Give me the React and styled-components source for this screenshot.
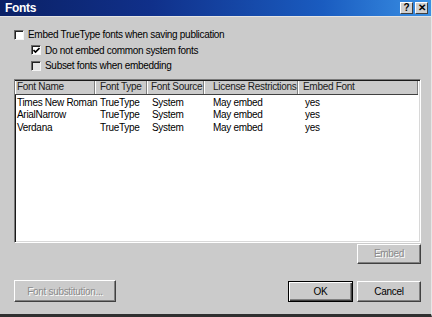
import React from 'react';
import styled, { createGlobalStyle } from 'styled-components';

const GlobalStyle = createGlobalStyle`
  html, body {
    margin: 0;
    padding: 0;
    background: #cbcbcb;
  }
  body {
    font-family: "Liberation Sans", Arial, sans-serif;
    font-size: 10px;
    color: #000;
  }
`;

const Window = styled.div`
  width: 432px;
  height: 317px;
  box-sizing: border-box;
  background: #cbcbcb;
  border-right: 1px solid #e6e6e6;
  border-bottom: 3px solid #303030;
  display: flex;
  flex-direction: column;
  overflow: hidden;
`;

const TitleBar = styled.div`
  height: 16px;
  flex: none;
  display: flex;
  align-items: center;
  padding: 0 3px 0 5px;
  background: linear-gradient(to right, #0b2166 0%, #10308a 35%, #1a5cc0 75%, #3a90e4 100%);
  border-bottom: 1px solid #e4e4e4;
`;

const Title = styled.span`
  flex: 1;
  color: #fff;
  font-weight: bold;
  font-size: 12px;
  letter-spacing: -0.3px;
`;

const CaptionButton = styled.div`
  width: 13px;
  height: 12px;
  margin-left: 2px;
  box-sizing: border-box;
  background: #d0d0d0;
  border: 1px solid;
  border-color: #fff #404040 #404040 #fff;
  display: flex;
  align-items: center;
  justify-content: center;
  font-weight: bold;
  font-size: 10px;
  line-height: 1;
`;

const Body = styled.div`
  flex: 1;
  display: flex;
  flex-direction: column;
  padding: 10px 10px 12px 14px;
`;

const Option = styled.label`
  display: flex;
  align-items: center;
  height: 15.5px;
  margin-left: ${p => (p.$indent ? '17px' : '0')};
  letter-spacing: -0.3px;
`;

const Box = styled.span`
  width: 10px;
  height: 10px;
  flex: none;
  box-sizing: border-box;
  margin-right: 4px;
  background: ${p => (p.$dim ? '#e6e6e6' : '#fff')};
  border: 1px solid;
  border-color: #6a6a6a #f4f4f4 #f4f4f4 #6a6a6a;
  box-shadow: inset 1px 1px 0 #222;
  display: flex;
  align-items: center;
  justify-content: center;
`;

const ListBox = styled.div`
  margin-top: 5px;
  height: 164px;
  box-sizing: border-box;
  background: #fff;
  border: 1px solid;
  border-color: #7a7a7a #fff #fff #7a7a7a;
  box-shadow: inset 1px 1px 0 #1a1a1a, inset -1px -1px 0 #d8d8d8;
  padding: 1px 2px 0 0;
`;

const HeaderRow = styled.div`
  display: flex;
  height: 13px;
  background: #cbcbcb;
  border-bottom: 1px solid #404040;
`;

const HeaderCell = styled.div`
  width: ${p => p.$w}px;
  flex: ${p => (p.$grow ? 1 : 'none')};
  box-sizing: border-box;
  padding-left: ${p => p.$pad}px;
  border-left: 1px solid #fff;
  border-right: 1px solid #808080;
  line-height: 12px;
  white-space: nowrap;
  overflow: hidden;
  letter-spacing: -0.3px;
  color: #202020;
`;

const Rows = styled.div`
  padding-top: 2px;
`;

const DataRow = styled.div`
  display: flex;
  height: 12.5px;
  line-height: 12px;
`;

const DataCell = styled.div`
  width: ${p => p.$w}px;
  flex: ${p => (p.$grow ? 1 : 'none')};
  box-sizing: border-box;
  padding-left: ${p => p.$pad + 1}px;
  white-space: nowrap;
  letter-spacing: -0.3px;
`;

const EmbedRow = styled.div`
  display: flex;
  justify-content: flex-end;
  margin-top: 1px;
`;

const Footer = styled.div`
  margin-top: auto;
  display: flex;
  align-items: center;
`;

const Button = styled.button`
  width: ${p => p.$w}px;
  height: ${p => p.$h || 21}px;
  margin-left: ${p => p.$ml || 0}px;
  box-sizing: border-box;
  background: #cbcbcb;
  font-family: "Liberation Sans", Arial, sans-serif;
  font-size: 10px;
  letter-spacing: -0.3px;
  padding: 0;
  color: ${p => (p.disabled ? '#8a8a8a' : '#000')};
  text-shadow: ${p => (p.disabled ? '1px 1px 0 #fff' : 'none')};
  border: 1px solid;
  border-color: ${p => (p.$default ? '#000' : '#fff #404040 #404040 #fff')};
  box-shadow: ${p =>
    p.$default
      ? 'inset 1px 1px 0 #fff, inset -1px -1px 0 #404040, inset -2px -2px 0 #808080'
      : 'inset -1px -1px 0 #808080'};
`;

const Spacer = styled.div`
  flex: 1;
`;

const columns = [
  { label: 'Font Name', w: 80, pad: 1, dpad: 1 },
  { label: 'Font Type', w: 52, pad: 4, dpad: 4 },
  { label: 'Font Source', w: 57, pad: 3, dpad: 4 },
  { label: 'License Restrictions', w: 94, pad: 8, dpad: 8 },
  { label: 'Embed Font', w: 0, pad: 4, dpad: 6, grow: true },
];

const fonts = [
  ['Times New Roman', 'TrueType', 'System', 'May embed', 'yes'],
  ['ArialNarrow', 'TrueType', 'System', 'May embed', 'yes'],
  ['Verdana', 'TrueType', 'System', 'May embed', 'yes'],
];

const Check = () => (
  <svg width="7" height="7" viewBox="0 0 7 7">
    <path d="M0.5 3 L2.5 5 L6.5 1" fill="none" stroke="#000" strokeWidth="1.6" />
  </svg>
);

export default function App() {
  return (
    <>
      <GlobalStyle />
      <Window>
        <TitleBar>
          <Title>Fonts</Title>
          <CaptionButton>?</CaptionButton>
          <CaptionButton>✕</CaptionButton>
        </TitleBar>
        <Body>
          <Option>
            <Box />
            Embed TrueType fonts when saving publication
          </Option>
          <Option $indent>
            <Box>
              <Check />
            </Box>
            Do not embed common system fonts
          </Option>
          <Option $indent>
            <Box $dim />
            Subset fonts when embedding
          </Option>
          <ListBox>
            <HeaderRow>
              {columns.map(c => (
                <HeaderCell key={c.label} $w={c.w} $pad={c.pad} $grow={c.grow}>
                  {c.label}
                </HeaderCell>
              ))}
            </HeaderRow>
            <Rows>
              {fonts.map(row => (
                <DataRow key={row[0]}>
                  {row.map((v, i) => (
                    <DataCell key={i} $w={columns[i].w} $pad={columns[i].dpad} $grow={columns[i].grow}>
                      {v}
                    </DataCell>
                  ))}
                </DataRow>
              ))}
            </Rows>
          </ListBox>
          <EmbedRow>
            <Button $w={64} $h={20} disabled>
              Embed
            </Button>
          </EmbedRow>
          <Footer>
            <Button $w={102} $h={22} disabled>
              Font substitution...
            </Button>
            <Spacer />
            <Button $w={65} $default>
              OK
            </Button>
            <Button $w={64} $ml={4}>
              Cancel
            </Button>
          </Footer>
        </Body>
      </Window>
    </>
  );
}
